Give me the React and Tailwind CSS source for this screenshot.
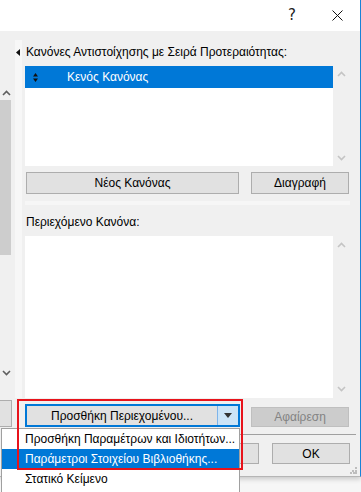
import React from "react";

const Chevron = ({ dir = "up", color = "#c4c4c4" }) => (
  <svg width="9" height="6" viewBox="0 0 9 6">
    <polyline
      points={dir === "up" ? "1,5 4.5,1.5 8,5" : "1,1 4.5,4.5 8,1"}
      fill="none"
      stroke={color}
      strokeWidth="1.6"
    />
  </svg>
);

const Button = ({ children, className = "" }) => (
  <div
    className={`flex items-center justify-center border border-[#adadad] bg-[#e1e1e1] ${className}`}
  >
    {children}
  </div>
);

const menuItems = [
  "Προσθήκη Παραμέτρων και Ιδιοτήτων...",
  "Παράμετροι Στοιχείου Βιβλιοθήκης...",
  "Στατικό Κείμενο",
];

export default function App() {
  return (
    <div className="relative w-[361px] h-[492px] overflow-hidden bg-[#f6f6f6] font-['Liberation_Sans',sans-serif] text-[12px] text-black">
      {/* Dialog window */}
      <div className="flex flex-col h-[477px] border-r border-b border-r-[#1883d7] border-b-[#b5b5b5] shadow-[0_2px_5px_rgba(0,0,0,0.2)]">
        {/* Title bar */}
        <div className="h-[31px] shrink-0 bg-white flex justify-end">
          <div className="w-[46px] flex items-center justify-center pl-[2px] text-[15px] text-[#222] font-['DejaVu_Sans',sans-serif]">
            ?
          </div>
          <div className="w-[46px] flex items-center justify-center">
            <svg width="11" height="11" viewBox="0 0 11 11">
              <path d="M0.5 0.5L10.5 10.5M10.5 0.5L0.5 10.5" stroke="#111" strokeWidth="1" />
            </svg>
          </div>
        </div>

        {/* Body */}
        <div className="flex-1 flex bg-[#f0f0f0]">
          {/* Left pane (cut off) */}
          <div className="w-[15px] shrink-0 flex flex-col">
            <div className="h-[55px]" />
            <div className="h-[14px] w-[12px] flex items-center justify-center">
              <Chevron dir="up" color="#5f5f5f" />
            </div>
            <div className="h-[155px] w-[11px] bg-[#cdcdcd]" />
            <div className="h-[111px]" />
            <div className="h-[14px] w-[12px] flex items-center justify-center">
              <Chevron dir="down" color="#5f5f5f" />
            </div>
            <div className="h-[20px]" />
            <div className="h-[27px] w-[12px] border border-l-0 border-[#adadad] bg-[#e1e1e1]" />
          </div>

          {/* Splitter strip */}
          <div className="w-[7px] shrink-0 flex flex-col">
            <div className="h-[9px]" />
            <div className="h-[358px] bg-[#f7f7f7] pt-[9px] pl-[1px]">
              <svg width="4" height="7" viewBox="0 0 4 7">
                <polygon points="4,0 4,7 0,3.5" fill="#111" />
              </svg>
            </div>
          </div>

          {/* Main pane */}
          <div className="flex-1 flex flex-col pl-[3px] pr-[10px]">
            <div className="h-[13px]" />
            <div className="h-[16px] leading-[16px] pl-[1px]">
              Κανόνες Αντιστοίχησης με Σειρά Προτεραιότητας:
            </div>

            {/* Rules list */}
            <div className="mt-[6px] h-[100px] flex">
              <div className="w-[308px] bg-white">
                <div className="h-[22px] bg-[#0078d7] flex items-center text-white">
                  <div className="w-[42px] pl-[8px]">
                    <svg width="5" height="9" viewBox="0 0 5 9">
                      <polygon points="2.5,0 5,3.5 0,3.5" fill="#111" />
                      <polygon points="0,5.5 5,5.5 2.5,9" fill="#111" />
                    </svg>
                  </div>
                  <span>Κενός Κανόνας</span>
                </div>
              </div>
              <div className="flex-1 flex flex-col items-center justify-between py-[5px] pr-[1px]">
                <Chevron dir="up" />
                <Chevron dir="down" />
              </div>
            </div>

            {/* Rule buttons */}
            <div className="mt-[6px] h-[22px] flex pl-[1px] gap-[12px]">
              <Button className="w-[213px]">Νέος Κανόνας</Button>
              <Button className="w-[98px]">Διαγραφή</Button>
            </div>

            <div className="mt-[7px] h-[4px] bg-[#f6f6f6]" />

            <div className="mt-[9px] h-[16px] leading-[16px] pl-[1px]">
              Περιεχόμενο Κανόνα:
            </div>

            {/* Content list */}
            <div className="mt-[6px] h-[162px] flex">
              <div className="w-[308px] bg-white" />
              <div className="flex-1 flex flex-col items-center justify-between py-[6px] pr-[1px]">
                <Chevron dir="up" />
                <Chevron dir="down" />
              </div>
            </div>

            {/* Content buttons */}
            <div className="mt-[6px] h-[23px] flex items-end gap-[11px]">
              <div className="w-[215px] h-[23px] flex border-2 border-[#0078d7] bg-[#e1e1e1]">
                <div className="flex-1 flex items-center justify-center">
                  Προσθήκη Περιεχομένου...
                </div>
                <div className="w-[21px] flex items-center justify-center bg-[#cce4f7] border-l border-[#7eb4ea]">
                  <svg width="8" height="5" viewBox="0 0 8 5">
                    <polygon points="0,0 8,0 4,5" fill="#333" />
                  </svg>
                </div>
              </div>
              <div className="w-[98px] h-[20px] flex items-center justify-center border border-[#bfbfbf] bg-[#cccccc] text-[#838383]">
                Αφαίρεση
              </div>
            </div>

            <div className="mt-[7px] h-px bg-[#a0a0a0] mr-[-6px]" />

            {/* Dialog buttons (cancel is hidden under the menu) */}
            <div className="mt-[8px] h-[21px] flex justify-end gap-[13px]">
              <Button className="w-[79px]" />
              <Button className="w-[78px]">OK</Button>
            </div>

            <div className="flex-1 flex justify-end items-start pt-[3px] mr-[-7px]">
              <svg width="7" height="7" viewBox="0 0 7 7">
                <rect x="5" y="0" width="2" height="2" fill="#bdbdbd" />
                <rect x="2" y="3" width="2" height="2" fill="#bdbdbd" />
                <rect x="5" y="3" width="2" height="2" fill="#bdbdbd" />
                <rect x="0" y="5" width="2" height="2" fill="#bdbdbd" />
                <rect x="3" y="5" width="2" height="2" fill="#bdbdbd" />
                <rect x="5" y="5" width="2" height="2" fill="#bdbdbd" />
              </svg>
            </div>
          </div>
        </div>
      </div>

      {/* Dropdown menu */}
      <div className="absolute left-[1px] top-[428px] w-[239px] h-[66px] border border-[#a0a0a0] bg-white">
        {menuItems.map((item, i) => (
          <div
            key={item}
            className={`h-[20px] flex items-center pl-[23px] ${
              i === 1 ? "bg-[#0078d7] text-white" : ""
            }`}
          >
            {item}
          </div>
        ))}
      </div>

      {/* Highlight box */}
      <div className="absolute left-[17px] top-[399px] w-[226px] h-[71px] border-2 border-[#e8131b]" />
    </div>
  );
}
